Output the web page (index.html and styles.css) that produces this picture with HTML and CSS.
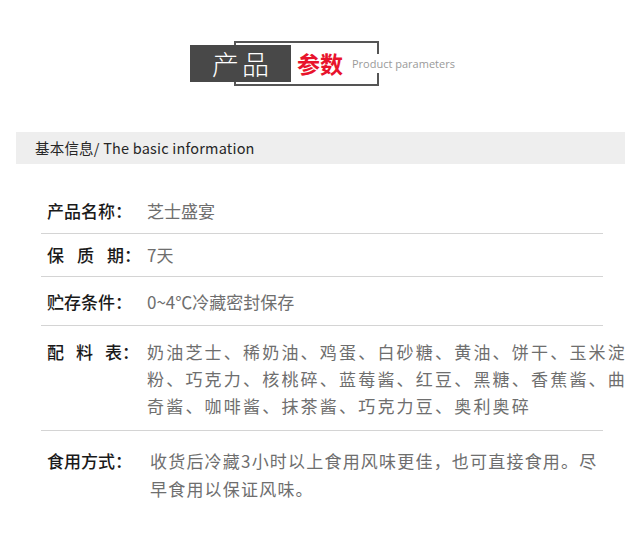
FILE: index.html
```html
<!DOCTYPE html>
<html lang="zh-CN">
<head>
<meta charset="utf-8">
<link rel="stylesheet" href="styles.css">
</head>
<body>
<div class="title">
  <div class="title-dark">产品</div>
  <div class="title-frame">
    <span class="title-red">参数</span>
    <span class="title-en">Product parameters</span>
  </div>
</div>
<div class="bar">基本信息/ The basic information</div>
<div class="list">
  <div class="row row-1">
    <div class="label">产品名称：</div>
    <div class="value">芝士盛宴</div>
  </div>
  <div class="row row-2">
    <div class="label"><span class="sp14">保质</span>期：</div>
    <div class="value">7天</div>
  </div>
  <div class="row row-3">
    <div class="label">贮存条件：</div>
    <div class="value">0~4℃冷藏密封保存</div>
  </div>
  <div class="row row-4">
    <div class="label"><span class="sp12">配料</span>表：</div>
    <div class="value value-ingr">奶油芝士、稀奶油、鸡蛋、白砂糖、黄油、饼干、玉米淀粉、巧克力、核桃碎、蓝莓酱、红豆、黑糖、香蕉酱、曲奇酱、咖啡酱、抹茶酱、巧克力豆、奥利奥碎</div>
  </div>
  <div class="row row-5">
    <div class="label label-wide">食用方式：</div>
    <div class="value value-use">收货后冷藏3小时以上食用风味更佳，也可直接食用。尽早食用以保证风味。</div>
  </div>
</div>
</body>
</html>
```

FILE: styles.css
```css
html, body {
  margin: 0;
  padding: 0;
  background: #fff;
  font-family: "Noto Sans CJK SC", "Noto Sans", sans-serif;
}

.title {
  display: flex;
  align-items: flex-start;
  padding: 41px 0 0 190px;
  height: 45px;
}

.title-dark {
  position: relative;
  z-index: 1;
  flex-shrink: 0;
  width: 101px;
  height: 37px;
  margin-top: 4px;
  margin-right: -57px;
  background: #484848;
  color: #fff;
  font-size: 27px;
  font-weight: 300;
  line-height: 37px;
  letter-spacing: 3px;
  text-indent: 3px;
  text-align: center;
}

.title-frame {
  flex-shrink: 0;
  box-sizing: border-box;
  width: 145px;
  height: 45px;
  border: 2px solid #555;
  display: flex;
  align-items: center;
  padding-left: 61px;
}

.title-red {
  flex-shrink: 0;
  color: #e8132c;
  font-size: 23px;
  font-weight: 700;
  line-height: 1;
}

.title-en {
  flex-shrink: 0;
  margin-left: 9px;
  white-space: nowrap;
  background: #fff;
  color: #9a9a9a;
  font-family: "Open Sans", "Noto Sans", sans-serif;
  font-size: 11px;
  line-height: 19px;
  padding-right: 2px;
}

.bar {
  margin: 46px 0 0 16px;
  width: 590px;
  height: 32px;
  padding-left: 19px;
  background: #eeeeee;
  color: #262626;
  font-size: 14.5px;
  font-weight: 400;
  letter-spacing: 0.2px;
  line-height: 32px;
}

.list {
  margin: 0 37px 0 41px;
}

.row {
  display: flex;
  align-items: flex-start;
  padding-left: 6px;
  border-bottom: 1px solid #d4d4d4;
  font-size: 17px;
  line-height: 27px;
}

.row-1 { padding-top: 33px; padding-bottom: 9px; }
.row-2 { padding-top: 7px; padding-bottom: 8px; }
.row-3 { padding-top: 11px; padding-bottom: 10px; }
.row-4 { padding-top: 12px; padding-bottom: 11px; }
.row-5 { padding-top: 16px; padding-bottom: 20px; border-bottom: none; line-height: 28px; }

.label {
  flex-shrink: 0;
  width: 100px;
  color: #1a1a1a;
  font-weight: 500;
}

.label-wide {
  width: 103px;
}

.sp14 { letter-spacing: 13px; }
.sp12 { letter-spacing: 12px; }

.value {
  color: #6e6e6e;
  white-space: nowrap;
}

.value-ingr {
  flex-shrink: 0;
  width: 490px;
  white-space: normal;
  letter-spacing: 2.2px;
}

.value-use {
  flex-shrink: 0;
  width: 456px;
  white-space: normal;
  letter-spacing: 1.2px;
}
```
